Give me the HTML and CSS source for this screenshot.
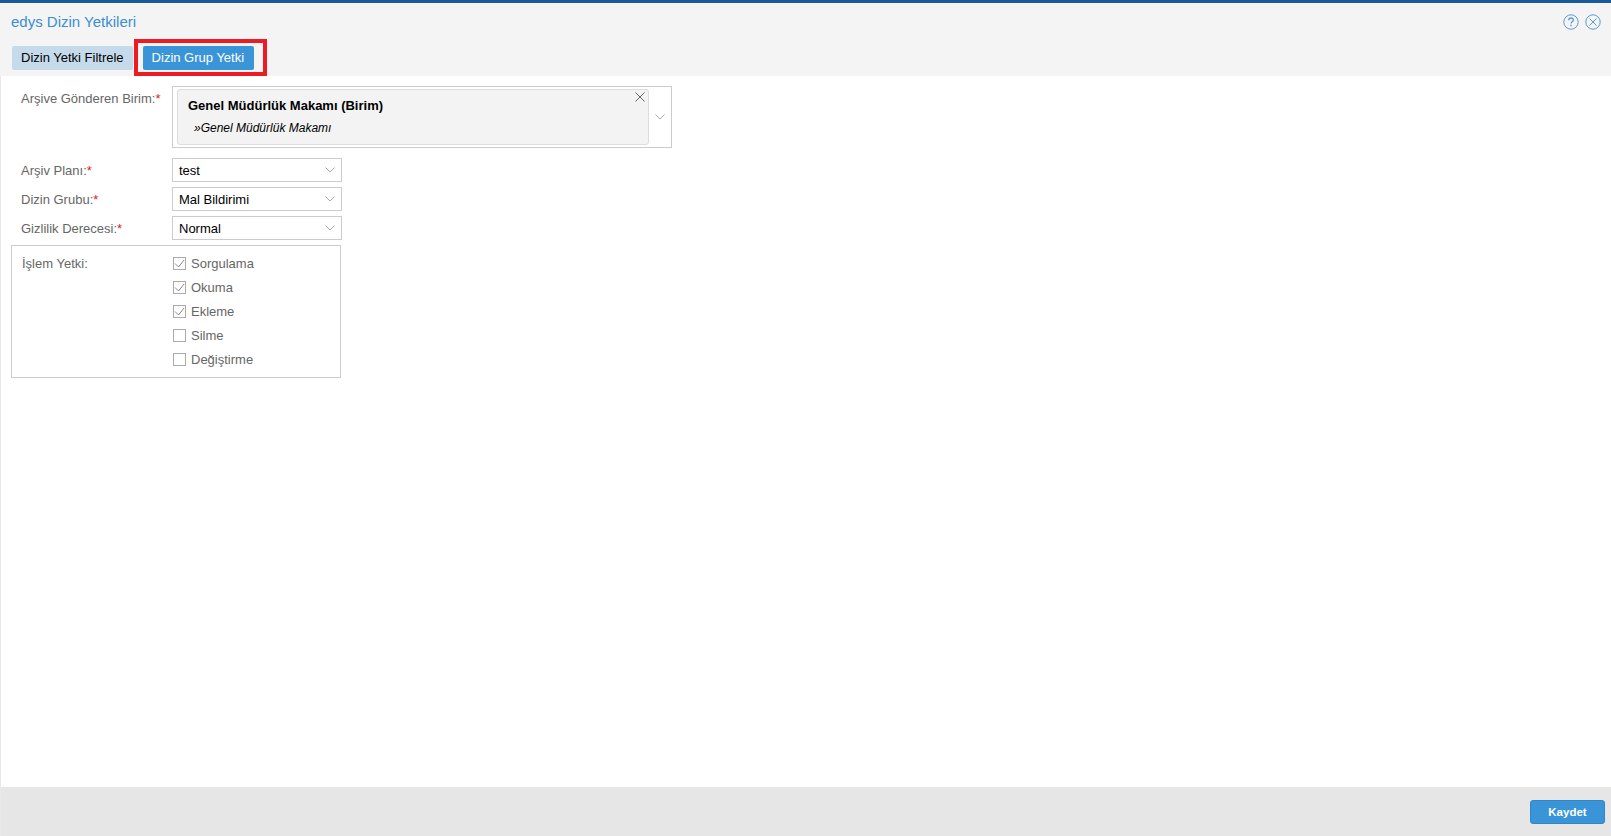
FILE: index.html
```html
<!DOCTYPE html>
<html lang="tr">

<head>
    <meta charset="UTF-8">
    <title>edys Dizin Yetkileri</title>
    <link rel="stylesheet" href="styles.css">
</head>

<body>
    <div class="window">
        <div class="head">
            <div class="title-row">
                <span class="title">edys Dizin Yetkileri</span>
                <div class="tools">
                    <svg width="16" height="16" viewBox="0 0 16 16" fill="none" stroke="#5b9bd1">
                        <circle cx="8" cy="8" r="7.2"/>
                        <path d="M5.7 6.2C5.8 4.8 6.8 4 8 4c1.3 0 2.3.8 2.3 2 0 1.700-2.300 1.800-2.300 3.600" stroke-width="1.300"/>
                        <path d="M8 10.800v1.500" stroke-width="1.400"/>
                    </svg>
                    <svg width="16" height="16" viewBox="0 0 16 16" fill="none" stroke="#5b9bd1">
                        <circle cx="8" cy="8" r="7.2"/>
                        <path d="M4.500 4.500l7 7M11.500 4.500l-7 7"/>
                    </svg>
                </div>
            </div>
            <div class="tabs">
                <a class="tab">Dizin Yetki Filtrele</a>
                <a class="tab active">Dizin Grup Yetki</a>
            </div>
        </div>

        <div class="content">
            <div class="row row-big">
                <label>Arşive Gönderen Birim:<em>*</em></label>
                <div class="picker">
                    <div class="picked">
                        <b>Genel Müdürlük Makamı (Birim)</b>
                        <i>»Genel Müdürlük Makamı</i>
                        <svg class="picked-close" width="10" height="10" viewBox="0 0 10 10" stroke="#666" fill="none">
                            <path d="M.5.5l9 9M9.500.5l-9 9"/>
                        </svg>
                    </div>
                    <svg class="chevron" width="10" height="6" viewBox="0 0 10 6" fill="none" stroke="#aaa">
                        <path d="M.5.5L5 5 9.500.5"/>
                    </svg>
                </div>
            </div>

            <div class="row">
                <label>Arşiv Planı:<em>*</em></label>
                <div class="select">
                    <span>test</span>
                    <svg class="chevron" width="10" height="6" viewBox="0 0 10 6" fill="none" stroke="#aaa">
                        <path d="M.5.5L5 5 9.500.5"/>
                    </svg>
                </div>
            </div>
            <div class="row">
                <label>Dizin Grubu:<em>*</em></label>
                <div class="select">
                    <span>Mal Bildirimi</span>
                    <svg class="chevron" width="10" height="6" viewBox="0 0 10 6" fill="none" stroke="#aaa">
                        <path d="M.5.5L5 5 9.500.5"/>
                    </svg>
                </div>
            </div>
            <div class="row">
                <label>Gizlilik Derecesi:<em>*</em></label>
                <div class="select">
                    <span>Normal</span>
                    <svg class="chevron" width="10" height="6" viewBox="0 0 10 6" fill="none" stroke="#aaa">
                        <path d="M.5.5L5 5 9.500.5"/>
                    </svg>
                </div>
            </div>

            <div class="group">
                <label>İşlem Yetki:</label>
                <ul class="checks">
                    <li><span class="box"><svg width="13" height="13" viewBox="0 0 13 13" fill="none" stroke="#8a8a8a"><path d="M2 6.500l3.500 3.500 5.500-7"/></svg></span>Sorgulama</li>
                    <li><span class="box"><svg width="13" height="13" viewBox="0 0 13 13" fill="none" stroke="#8a8a8a"><path d="M2 6.500l3.500 3.500 5.500-7"/></svg></span>Okuma</li>
                    <li><span class="box"><svg width="13" height="13" viewBox="0 0 13 13" fill="none" stroke="#8a8a8a"><path d="M2 6.500l3.500 3.500 5.500-7"/></svg></span>Ekleme</li>
                    <li><span class="box"></span>Silme</li>
                    <li><span class="box"></span>Değiştirme</li>
                </ul>
            </div>
        </div>

        <div class="foot">
            <a class="save">Kaydet</a>
        </div>
    </div>
</body>

</html>
```

FILE: styles.css
```css
* {
    margin: 0;
    padding: 0;
    box-sizing: border-box;
}

html,
body {
    height: 100%;
}

body {
    font-family: "Liberation Sans", Arial, sans-serif;
    font-size: 13px;
    color: #000;
    background: #fff;
    overflow: hidden;
}

.window {
    height: 836px;
    display: flex;
    flex-direction: column;
    border-left: 1px solid #e8e8e8;
}

/* head */
.head {
    height: 76px;
    flex: none;
    background: #f4f4f4;
    border-top: 3px solid #175a9c;
    margin-left: -1px;
}

.title-row {
    height: 37px;
    padding: 0 10px 0 11px;
    display: flex;
    align-items: center;
    justify-content: space-between;
}

.title {
    font-size: 15px;
    color: #3a8ed3;
}

.tools {
    display: flex;
    gap: 6px;
}

.tabs {
    display: flex;
    gap: 10px;
    padding: 6px 0 0 12px;
}

.tab {
    height: 24px;
    line-height: 24px;
    padding: 0 9px;
    border-radius: 2px;
    background: #c5dbeb;
    white-space: nowrap;
}

.tab.active {
    position: relative;
    width: 111px;
    background: #3a94d8;
    color: #fff;
}

/* red mark drawn over the screenshot */
.tab.active::after {
    content: "";
    position: absolute;
    left: -9px;
    top: -7px;
    width: 125px;
    height: 29px;
    border: 4px solid #ed1c24;
}

/* form */
.content {
    flex: 1;
    padding: 10px 0 0 10px;
}

.row {
    display: flex;
    align-items: center;
    height: 24px;
    margin-bottom: 5px;
}

.row-big {
    height: 62px;
    margin-bottom: 10px;
    align-items: flex-start;
}

label {
    width: 161px;
    flex: none;
    padding-left: 10px;
    color: #666;
}

.row-big label {
    padding-top: 5px;
}

label em {
    color: #e02020;
    font-style: normal;
}

.picker {
    width: 500px;
    height: 62px;
    border: 1px solid #ccc;
    padding: 2px 0 2px 4px;
    display: flex;
    align-items: center;
}

.picked {
    position: relative;
    width: 472px;
    height: 56px;
    padding: 8px 0 0 10px;
    background: #f3f3f3;
    border: 1px solid #ddd;
    border-radius: 3px;
}

.picked b {
    display: block;
}

.picked i {
    display: block;
    font-size: 12px;
    margin: 8px 0 0 6px;
}

.picked-close {
    position: absolute;
    right: 3px;
    top: 2px;
}

.picker .chevron {
    margin-left: 6px;
}

.select {
    width: 170px;
    height: 24px;
    border: 1px solid #ccc;
    padding: 0 6px;
    display: flex;
    align-items: center;
    justify-content: space-between;
}

.select span {
    padding-top: 1px;
}

.group {
    width: 330px;
    height: 133px;
    border: 1px solid #ccc;
    display: flex;
    padding-top: 5px;
}

.group label {
    width: 161px;
    padding: 5px 0 0 10px;
}

.checks {
    list-style: none;
    color: #666;
}

.checks li {
    height: 24px;
    display: flex;
    align-items: center;
    gap: 5px;
}

.box {
    width: 13px;
    height: 13px;
    border: 1px solid #aaa;
    background: #fff;
    flex: none;
}

.box svg {
    display: block;
    margin: -1px;
}

/* foot */
.foot {
    height: 49px;
    flex: none;
    background: #e6e6e6;
    display: flex;
    justify-content: flex-end;
    padding: 13px 6px 0 0;
}

.save {
    width: 75px;
    height: 24px;
    line-height: 22px;
    text-align: center;
    font-size: 11.5px;
    font-weight: bold;
    color: #fff;
    background: #3a94d8;
    border: 1px solid #2f86c9;
    border-radius: 3px;
}
```
